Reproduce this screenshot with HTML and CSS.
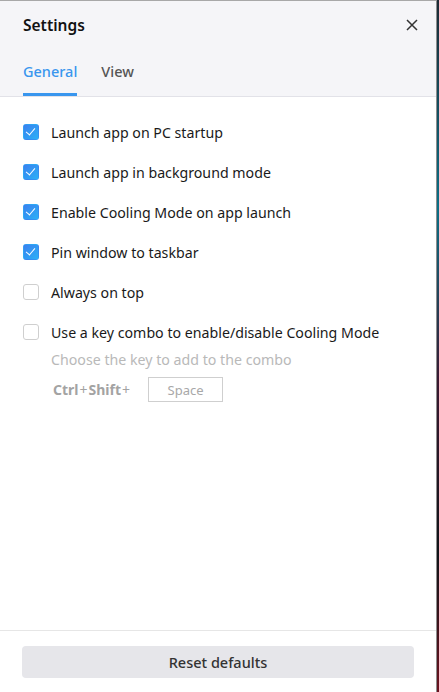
FILE: index.html
```html
<!DOCTYPE html>
<html>
<head>
    <meta charset="utf-8">
    <title>Settings</title>
    <link rel="stylesheet" href="styles.css">
</head>
<body>
<div class="window">
    <div class="header">
        <div class="title_row">
            <span class="title">Settings</span>
            <span class="close">
                <svg width="12" height="12" viewBox="0 0 12 12"><path d="M1 1L11 11M11 1L1 11" stroke="#333" stroke-width="1.5" fill="none"/></svg>
            </span>
        </div>
        <div class="tabs">
            <span class="tab active">General</span>
            <span class="tab">View</span>
        </div>
    </div>

    <div class="content">
        <div class="option"><span class="check on"></span>Launch app on PC startup</div>
        <div class="option"><span class="check on"></span>Launch app in background mode</div>
        <div class="option"><span class="check on"></span>Enable Cooling Mode on app launch</div>
        <div class="option"><span class="check on"></span>Pin window to taskbar</div>
        <div class="option"><span class="check"></span>Always on top</div>
        <div class="option"><span class="check"></span>Use a key combo to enable/disable Cooling Mode</div>
        <div class="combo">
            <div class="hint">Choose the key to add to the combo</div>
            <div class="keys">
                <span class="mods">Ctrl<i>+</i>Shift<i>+</i></span>
                <span class="keybox">Space</span>
            </div>
        </div>
    </div>

    <div class="footer">
        <div class="reset">Reset defaults</div>
    </div>
</div>
</body>
</html>
```
FILE: styles.css
```css
html, body
{
    margin:0;
    height:100%;
}

body
{
    background:linear-gradient(#1d2a35, #0b6f86 30%, #3a1830 55%, #101418 80%, #6a1420);
    font-family:"Noto Sans", "Open Sans", sans-serif;
    color:#222;
}

.window
{
    width:436px;
    height:691px;
    background:white;
    border-top:1px solid #a8a8a8;
    border-right:1px solid #8e8e8e;
    display:flex;
    flex-direction:column;
}

.header
{
    background:#f5f5f8;
    border-bottom:1px solid #e2e2e8;
    padding:0 0 0 23px;
}

.title_row
{
    display:flex;
    align-items:center;
    justify-content:space-between;
    height:48px;
    padding-right:18px;
}

.title
{
    font-size:15.5px;
    font-weight:600;
    color:#111;
}

.close
{
    display:flex;
}

.tabs
{
    display:flex;
    gap:24px;
    height:47px;
    align-items:stretch;
}

.tab
{
    font-size:14.5px;
    font-weight:500;
    color:#555;
    display:flex;
    align-items:center;
    border-bottom:3px solid transparent;
}

.tab.active
{
    color:#3996ee;
    border-bottom-color:#3996ee;
}

.content
{
    flex:1;
    padding:15px 23px 0 23px;
}

.option
{
    display:flex;
    align-items:center;
    height:40px;
    font-size:14.2px;
    color:#1a1a1a;
}

.check
{
    width:14px;
    height:14px;
    border:1px solid #cfcfcf;
    border-radius:3px;
    margin-right:12px;
    box-sizing:content-box;
    flex:none;
}

.check.on
{
    border-color:transparent;
    background:linear-gradient(135deg, #3b80ef, #2ab0f6);
    position:relative;
}

.check.on::after
{
    content:"";
    position:absolute;
    left:4px;
    top:1px;
    width:4px;
    height:8px;
    border:solid white;
    border-width:0 1.6px 1.6px 0;
    transform:rotate(40deg);
}

.combo
{
    padding-left:28px;
}

.hint
{
    font-size:14.2px;
    color:#b9b9b9;
    margin-top:-2px;
}

.keys
{
    display:flex;
    align-items:center;
    margin-top:8px;
}

.mods
{
    font-size:14px;
    font-weight:700;
    color:#a3a3a3;
    padding-left:2px;
    width:95px;
}

.mods i
{
    font-style:normal;
    font-weight:400;
    margin:0 1px;
}

.keybox
{
    width:73px;
    height:23px;
    border:1px solid #cfcfcf;
    font-size:13px;
    color:#a8a8a8;
    display:flex;
    align-items:center;
    justify-content:center;
}

.footer
{
    border-top:1px solid #e6e6e6;
    padding:15px 22px 14px 22px;
}

.reset
{
    height:32px;
    background:#e6e6ea;
    border-radius:4px;
    display:flex;
    align-items:center;
    justify-content:center;
    font-size:14.5px;
    font-weight:500;
    color:#333;
}
```
